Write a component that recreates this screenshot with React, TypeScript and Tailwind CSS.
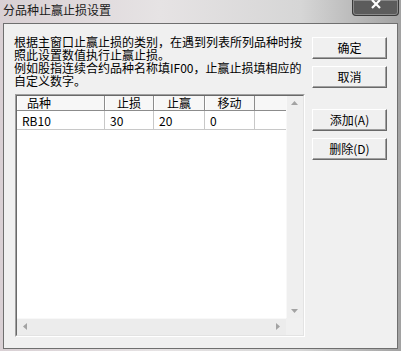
import type { ReactNode } from "react";

const columns = [
  { label: "品种", width: "w-[88px]", align: "justify-start pl-[10px]" },
  { label: "止损", width: "w-[49px]", align: "justify-center" },
  { label: "止赢", width: "w-[51px]", align: "justify-center" },
  { label: "移动", width: "w-[50px]", align: "justify-center" },
];

const row = ["RB10", "30", "20", "0"];

function DialogButton({ children }: { children: ReactNode }) {
  return (
    <div className="flex h-[22px] w-[75px] items-center justify-center border border-t-white border-l-white border-r-[#696969] border-b-[#696969] bg-[#f0f0f0] leading-none shadow-[inset_-1px_-1px_0_#a0a0a0]">
      {children}
    </div>
  );
}

function Arrow({ dir }: { dir: "up" | "down" | "left" | "right" }) {
  const points = {
    up: "0,4 7,4 3.5,0",
    down: "0,0 7,0 3.5,4",
    left: "4,0 4,7 0,3.5",
    right: "0,0 0,7 4,3.5",
  }[dir];
  const size = dir === "up" || dir === "down" ? { w: 7, h: 4 } : { w: 4, h: 7 };
  return (
    <svg width={size.w} height={size.h} viewBox={`0 0 ${size.w} ${size.h}`}>
      <polygon points={points} fill="#a3a3a3" />
    </svg>
  );
}

export default function App() {
  return (
    <div className="flex h-[351px] w-[401px] flex-col overflow-hidden bg-[linear-gradient(90deg,#d9d0d4_0%,#e6e3e4_40%,#d6d6d6_75%,#a2a2a2_100%)] font-['Noto_Sans_CJK_SC',sans-serif] text-[12px] text-black">
      {/* title bar */}
      <div className="flex h-[23px] shrink-0 items-start justify-between pl-[3px]">
        <span className="pt-[3px] leading-[14px] text-[#1a1a1a]">分品种止赢止损设置</span>
        <div className="mr-[2px] flex h-[16px] w-[47px] items-start justify-center rounded-b-[4px] border border-t-0 border-[#3a3a3a] bg-[#5c5c5c] shadow-[inset_0_0_0_1px_#8a8a8a]">
          <svg width="10" height="9" viewBox="0 0 10 9">
            <path d="M1 0 L9 8 M9 0 L1 8" stroke="#fff" strokeWidth="2.2" />
          </svg>
        </div>
      </div>

      {/* client area */}
      <div className="mx-[3px] mb-[2px] flex flex-1 border border-[#6f6f6f] bg-[#f0f0f0] pl-[11px] pt-[11px]">
        <div className="flex w-[290px] flex-col">
          <p className="-ml-px whitespace-nowrap leading-[13px]">
            根据主窗口止赢止损的类别，在遇到列表所列品种时按
            <br />
            照此设置数值执行止赢止损。
            <br />
            例如股指连续合约品种名称填IF00，止赢止损填相应的
            <br />
            自定义数字。
          </p>

          <div className="mt-[7px] h-[243px] w-[290px] border border-t-[#a0a0a0] border-l-[#a0a0a0] border-r-white border-b-white">
            <div className="flex h-full flex-col border border-t-[#696969] border-l-[#696969] border-r-[#e3e3e3] border-b-[#e3e3e3] bg-white">
              <div className="flex min-h-0 flex-1">
                <div className="flex flex-1 flex-col">
                  <div className="flex h-[15px] bg-[#f7f7f7]">
                    {columns.map((c) => (
                      <div
                        key={c.label}
                        className={`flex ${c.width} ${c.align} items-center border-r border-b border-r-[#8c8c8c] border-b-[#8c8c8c] leading-none shadow-[inset_1px_0_0_#fff]`}
                      >
                        {c.label}
                      </div>
                    ))}
                    <div className="flex-1 border-b border-b-[#8c8c8c]" />
                  </div>
                  <div className="flex h-[19px]">
                    {row.map((v, i) => (
                      <div
                        key={i}
                        className={`flex ${columns[i].width} items-center border-r border-b border-[#c8c8c8] pl-[5px] pt-[2px] leading-none`}
                      >
                        {v}
                      </div>
                    ))}
                    <div className="flex-1 border-b border-[#c8c8c8]" />
                  </div>
                </div>
                <div className="flex w-[17px] flex-col items-center justify-between bg-[#efefef] py-[5px] shadow-[inset_1px_0_0_#f8f8f8]">
                  <Arrow dir="up" />
                  <Arrow dir="down" />
                </div>
              </div>
              <div className="flex h-[17px]">
                <div className="flex flex-1 items-center justify-between bg-[#ececec] px-[6px] shadow-[inset_0_1px_0_#f8f8f8]">
                  <Arrow dir="left" />
                  <Arrow dir="right" />
                </div>
                <div className="w-[17px] bg-[#f0f0f0]" />
              </div>
            </div>
          </div>
        </div>

        <div className="ml-[7px] flex flex-col pt-[2px]">
          <DialogButton>确定</DialogButton>
          <div className="h-[7px]" />
          <DialogButton>取消</DialogButton>
          <div className="h-[21px]" />
          <DialogButton>添加(A)</DialogButton>
          <div className="h-[7px]" />
          <DialogButton>删除(D)</DialogButton>
        </div>
      </div>
    </div>
  );
}
